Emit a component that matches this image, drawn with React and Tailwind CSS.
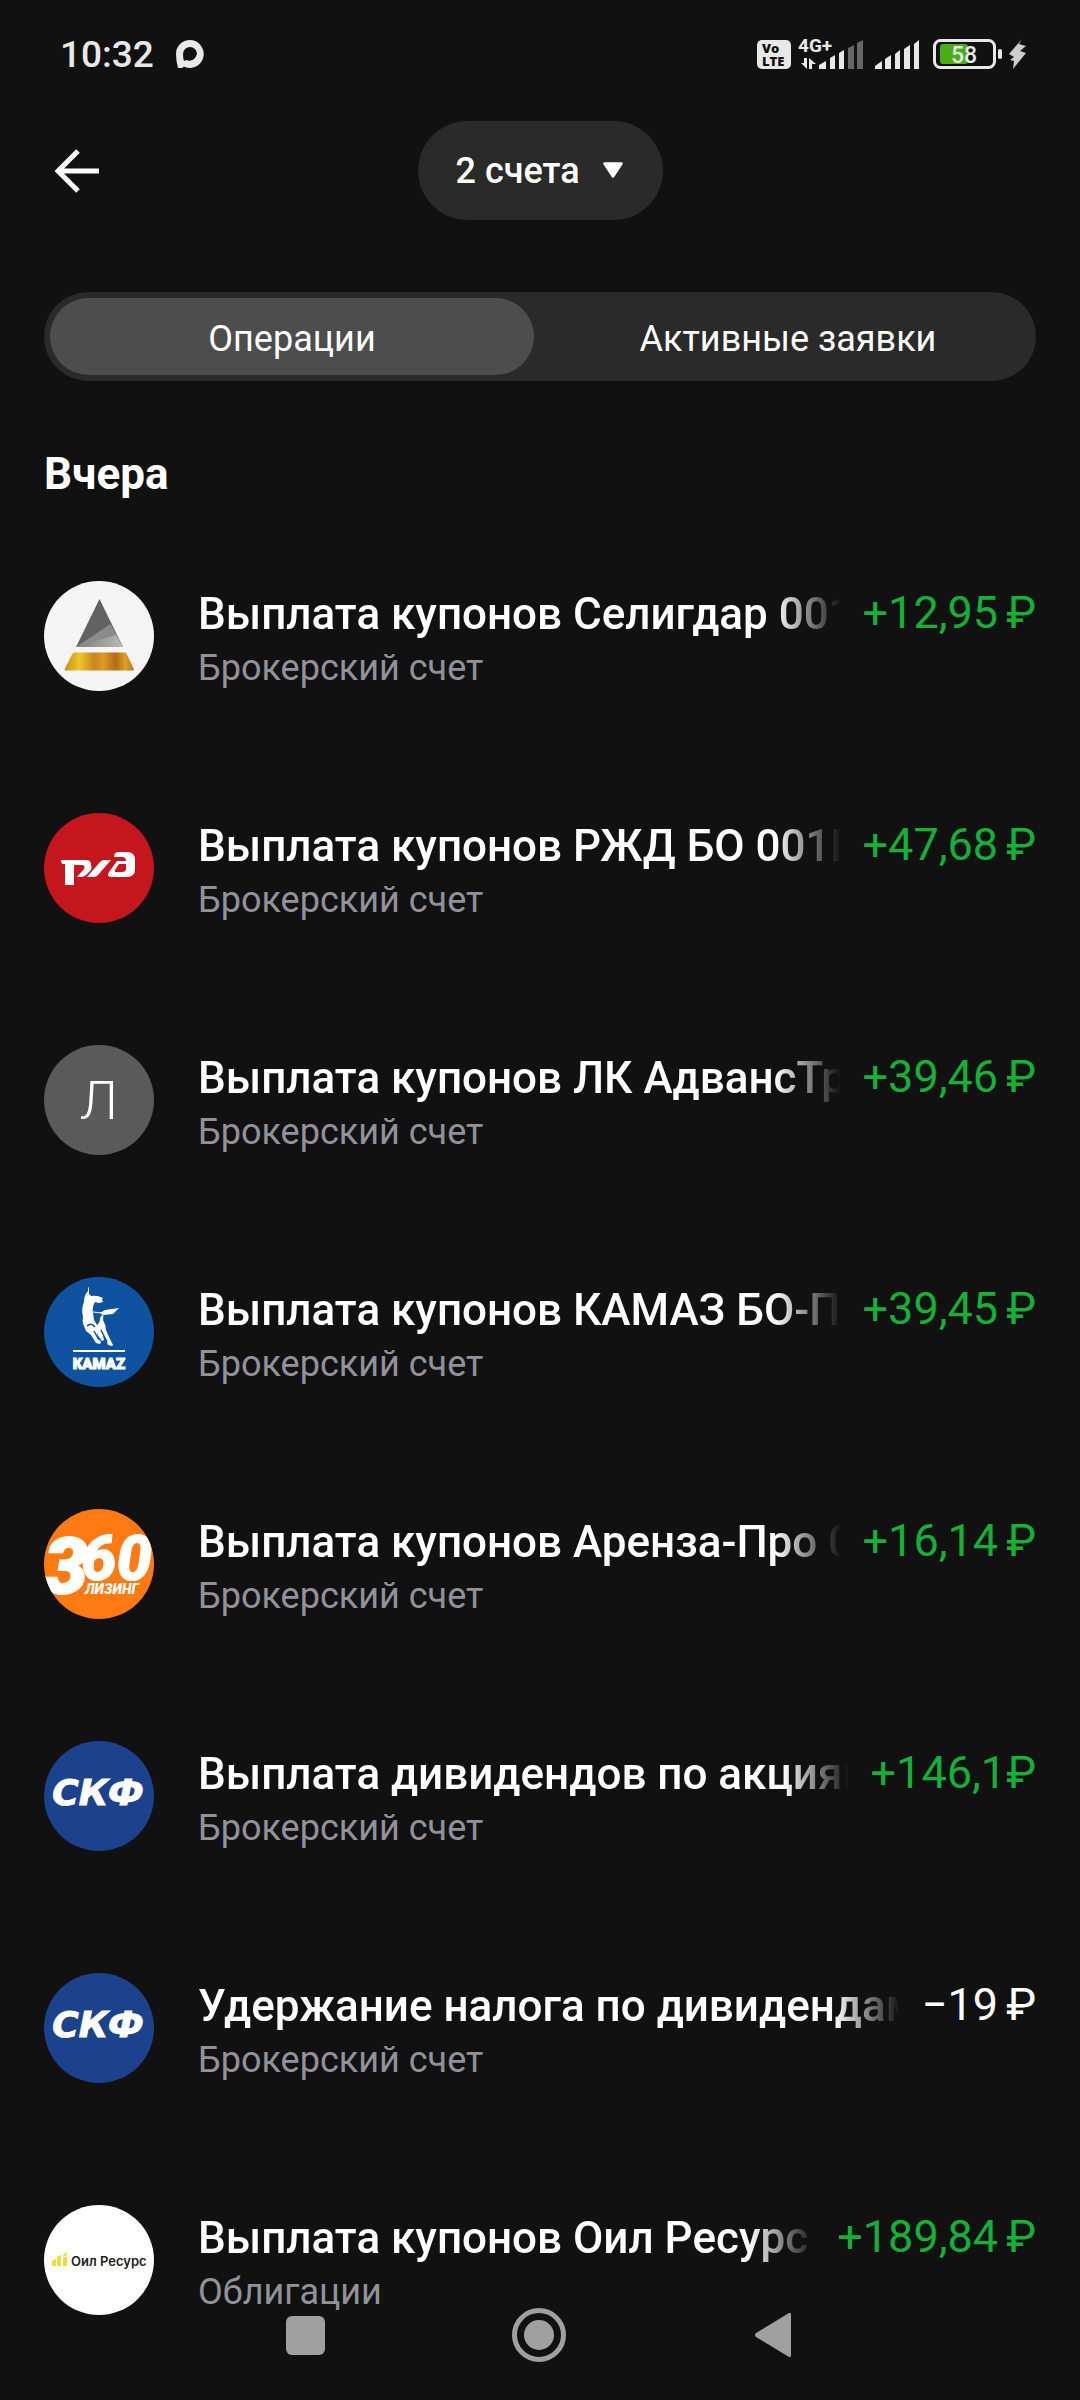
import React, { useState } from "react";

const SeligdarLogo = () => (
  <svg viewBox="0 0 110 110" className="size-full" aria-hidden="true">
    <defs>
      <linearGradient id="gold" x1="0" x2="1" y1="0" y2="0">
        <stop offset="0" stopColor="#c98a1c" />
        <stop offset="0.22" stopColor="#efc62c" />
        <stop offset="0.42" stopColor="#c9861f" />
        <stop offset="0.56" stopColor="#dc9a26" />
        <stop offset="0.74" stopColor="#b36a18" />
        <stop offset="0.88" stopColor="#dd9f28" />
        <stop offset="1" stopColor="#b9741a" />
      </linearGradient>
      <linearGradient id="steel" x1="0" x2="1" y1="0" y2="0">
        <stop offset="0" stopColor="#7c7c7c" />
        <stop offset="1" stopColor="#b9b9b9" />
      </linearGradient>
    </defs>
    <rect width="110" height="110" fill="#f5f5f5" />
    <path d="M55.500 18L79 66H32z" fill="#626262" />
    <path d="M66.500 43L32 66h47z" fill="#8b8b8b" />
    <path d="M72 54L32 66h47z" fill="url(#steel)" />
    <path d="M30 71.500h51q1 0 1.500 1l7 15q1 2-1 2H22q-2 0-1-2l7.500-15q.5-1 1.500-1z" fill="url(#gold)" />
  </svg>
);

const RzdLogo = () => (
  <svg viewBox="0 0 110 110" className="size-full" aria-hidden="true">
    <rect width="110" height="110" fill="#c5161d" />
    <g fill="#fff">
      <path d="M17 47h25q5 0 5 5 1 3 0 5l-5 5q-2 2-5 2h-4l7-8q2-4-3-4h-7v20h-9V51h-2q-2 0-2-4z" />
      <path d="M43 64l13-15q2-2 4-2h7L54 62q-2 2-4 2z" />
      <path
        d="M70 44q0-5 5-5h8q8 0 8 8v9q0 8-8 8H68q-6 0-3-5l8-11h9q0-4-4-4zm5 7l-4 6q-1 2 1 2h6q4 0 4-3v-5z"
        fillRule="evenodd"
      />
    </g>
  </svg>
);

const KamazLogo = () => (
  <svg viewBox="0 0 110 110" className="size-full" aria-hidden="true">
    <rect width="110" height="110" fill="#0f529f" />
    <path
      d="M45 17l2 2q6-1 12 2l-1 1 1 3-4 1-4-1q-3 5-2 11l1 7 3 5q3-2 3-7l2-3 1 5q3 5 3 10l3 7 4 8-1 1-4-1-2-6-3-4 1 5-2 1-3-4-2-4 1 5 3 4-1 2-4-1-5-8-5-4-2-5q-2-3-1-9-2-8 1-15 0-7 4-11 0-4 1-4z"
      fill="#fff"
    />
    <path d="M49 35l9 1M59 37l-1 13" stroke="#fff" fill="none" />
    <path d="M56 36l5-3 14-2-6 6-10 1z" fill="#fff" />
    <path d="M43 49q4-4 8 1M50 54l5 9M57 53l6 12" stroke="#0f529f" fill="none" strokeWidth="1.500" />
    <rect x="29" y="73" width="52" height="2" fill="#fff" />
    <text x="55" y="92" textAnchor="middle" fill="#fff" stroke="#fff" className="font-['Roboto'] text-[15px] font-black">
      KAMAZ
    </text>
  </svg>
);

const LeasingLogo = () => (
  <svg viewBox="0 0 110 110" className="size-full" aria-hidden="true">
    <rect width="110" height="110" fill="#ff7a12" />
    <g fill="#fff" className="font-['Roboto'] font-black italic">
      <text x="0" y="84" stroke="#fff" strokeWidth="2" className="text-[78px]">3</text>
      <text x="37" y="71" stroke="#fff" className="text-[63px]">60</text>
      <text x="41" y="85" className="text-[14px]">ЛИЗИНГ</text>
    </g>
  </svg>
);

const SkfLogo = () => (
  <svg viewBox="0 0 110 110" className="size-full" aria-hidden="true">
    <rect width="110" height="110" fill="#1d428d" />
    <text x="54" y="64" textAnchor="middle" fill="#fff" stroke="#fff" className="font-['DejaVu_Sans'] text-[36px] font-bold italic">
      СКФ
    </text>
  </svg>
);

const OilLogo = () => (
  <svg viewBox="0 0 110 110" className="size-full" aria-hidden="true">
    <rect width="110" height="110" fill="#fff" />
    <path d="M8 56l4-2v7H8zM13 52l4-2v11h-4zM19 53l4-2v10h-4zM19 50l4-3v3l-4 2z" fill="#ecdc3c" />
    <text x="27" y="61" fill="#222" className="font-['Inter'] text-[13px] font-semibold">
      Оил Ресурс
    </text>
  </svg>
);

const LetterLogo = ({ letter }) => (
  <span className="flex size-full items-center justify-center bg-[#5a5a5a] text-[54px] font-light text-white">
    {letter}
  </span>
);

const operations = [
  { id: 1, logo: <SeligdarLogo />, title: "Выплата купонов Селигдар 001", account: "Брокерский счет", amount: "+12,95 ₽" },
  { id: 2, logo: <RzdLogo />, title: "Выплата купонов РЖД БО 001P", account: "Брокерский счет", amount: "+47,68 ₽" },
  { id: 3, logo: <LetterLogo letter="Л" />, title: "Выплата купонов ЛК АдвансТр", account: "Брокерский счет", amount: "+39,46 ₽" },
  { id: 4, logo: <KamazLogo />, title: "Выплата купонов КАМАЗ БО-П", account: "Брокерский счет", amount: "+39,45 ₽" },
  { id: 5, logo: <LeasingLogo />, title: "Выплата купонов Аренза-Про 0", account: "Брокерский счет", amount: "+16,14 ₽" },
  { id: 6, logo: <SkfLogo />, title: "Выплата дивидендов по акциям", account: "Брокерский счет", amount: "+146,1₽" },
  { id: 7, logo: <SkfLogo />, title: "Удержание налога по дивидендам", account: "Брокерский счет", amount: "−19 ₽" },
  { id: 8, logo: <OilLogo />, title: "Выплата купонов Оил Ресурс", account: "Облигации", amount: "+189,84 ₽" },
];

const StatusBar = () => (
  <div className="flex h-[108px] items-center justify-between pr-[53px] pl-[60px] text-[#e8e8e8]">
    <div className="flex items-center gap-[22px]">
      <span className="pt-[2px] text-[37px] leading-[42px] font-medium">10:32</span>
      <svg width="28" height="28" viewBox="0 0 28 28" aria-hidden="true">
        <path
          d="M14 0a14 14 0 1 1-4 27.500L8 26.500 6 28H2Q0 21 0 14A14 14 0 0 1 14 0zm0 7a7 7 0 0 0-7 7q0 4 1 7l2-1q8 3 11-6a7 7 0 0 0-7-7z"
          fill="currentColor"
          fillRule="evenodd"
        />
      </svg>
    </div>

    <svg width="270" height="32" viewBox="757 38 270 32" fill="currentColor" aria-hidden="true">
      <rect x="757" y="40" width="34" height="29" rx="5" />
      <g fill="#111" className="font-['Open_Sans'] font-extrabold">
        <text x="762" y="53" className="text-[13px]">Vo</text>
        <text x="762" y="66" className="text-[13px]">LTE</text>
      </g>
      <text x="798" y="52" className="font-['Roboto'] text-[19px] font-bold">4G+</text>
      <path d="M804 58h3v11l-6-6h3zM809 58l7 6h-4v5h-3z" />
      <path d="M819 69v-4l7-4v8zM830 69V58l5-3v14zM839 69V53l5-3v19z" />
      <path d="M848 69V48l6-3v24zM857 69V43l6-3v29z" fill="#666" />
      <path d="M875 69v-3l7-5v8zM885 69V59l6-4v14zM895 69V54l5-4v19zM904 69V49l6-4v24zM914 69V44l5-4v29z" />
      <rect x="934.500" y="40.500" width="60" height="27" rx="6" fill="none" stroke="currentColor" strokeWidth="3" />
      <rect x="940" y="44" width="28" height="20" rx="3" fill="#4bad14" />
      <rect x="998" y="49" width="4" height="10" rx="2" />
      <text x="964" y="63" textAnchor="middle" className="font-['Roboto'] text-[23px] font-medium">58</text>
      <path d="M1022 39l-13 15 5 3-4 3 4 1-1 8 13-16-6-2 6-5-7-2z" fill="#ccc" />
    </svg>
  </div>
);

const Amount = ({ value }) => {
  const [number, currency] = value.split(" ");

  return (
    <span
      className={`flex gap-2 text-[45px] leading-[50px] whitespace-nowrap ${
        value.startsWith("+") ? "text-[#14b038]" : "text-white"
      }`}
    >
      <span>{number}</span>
      {currency && <span>{currency}</span>}
    </span>
  );
};

const OperationItem = ({ logo, title, account, amount }) => (
  <li className="flex">
    <div className="size-[110px] shrink-0 overflow-hidden rounded-full">{logo}</div>
    <div className="ml-11 min-w-0 flex-1">
      <div className="flex gap-[22px] pt-[7px]">
        <h3 className="min-w-0 flex-1 overflow-hidden text-[44px] leading-[52px] font-medium whitespace-nowrap text-white [mask-image:linear-gradient(to_right,black_calc(100%-66px),transparent)]">
          {title}
        </h3>
        <Amount value={amount} />
      </div>
      <p className="mt-[5px] text-[36px] leading-[46px] text-[#91929a]">{account}</p>
    </div>
  </li>
);

const tabs = ["Операции", "Активные заявки"];

const App = () => {
  const [tab, setTab] = useState(tabs[0]);

  return (
    <div className="min-h-screen bg-[#111111] font-['Roboto',sans-serif]">
      <StatusBar />

      <header className="grid grid-cols-[1fr_auto_1fr] items-center px-11 pt-[13px]">
        <button aria-label="Назад" className="flex size-[66px] items-center justify-center justify-self-start text-white">
          <svg width="44" height="44" viewBox="0 0 44 44" fill="none" stroke="currentColor" strokeWidth="5" aria-hidden="true">
            <path d="M23 2L3 22l20 20M4 22h40" />
          </svg>
        </button>
        <label className="relative flex items-center text-white">
          <select
            aria-label="Счета"
            className="h-[99px] appearance-none rounded-full bg-[#2a2a2a] pr-[82px] pl-[38px] text-[36px] leading-[42px] font-medium"
          >
            <option>2 счета</option>
          </select>
          <svg width="20" height="17" viewBox="0 0 22 18" className="pointer-events-none absolute right-10" aria-hidden="true">
            <path d="M2 0h18q3 0 1 3L12.500 16q-1.500 2-3 0L1 3Q-1 0 2 0z" fill="currentColor" />
          </svg>
        </label>
      </header>

      <main className="px-11 pt-[72px] pb-[84px]">
        <div role="tablist" className="grid grid-cols-2 gap-3 rounded-full bg-[#2a2a2a] p-[6px]">
          {tabs.map((name) => (
            <button
              key={name}
              role="tab"
              aria-selected={tab === name}
              onClick={() => setTab(name)}
              className={`h-[77px] rounded-full pt-1 text-[36px] leading-[42px] text-white ${tab === name ? "bg-[#4d4d4d]" : ""}`}
            >
              {name}
            </button>
          ))}
        </div>

        <h2 className="mt-[67px] text-[44px] leading-[52px] font-bold text-white">Вчера</h2>
        <ul className="mt-[81px] flex flex-col gap-[122px]">
          {operations.map((item) => (
            <OperationItem key={item.id} {...item} />
          ))}
        </ul>
      </main>

      <nav className="fixed inset-x-0 bottom-0 flex h-[130px] items-center justify-center gap-[178px] pr-[2px] text-[#a0a0a0]">
        <button aria-label="Недавние" className="flex size-14 items-center justify-center">
          <span className="size-[39px] rounded-md bg-current" />
        </button>
        <button aria-label="Домой" className="flex size-14 items-center justify-center">
          <svg width="54" height="54" viewBox="0 0 54 54" aria-hidden="true">
            <circle cx="27" cy="27" r="24.500" fill="none" stroke="currentColor" strokeWidth="5" />
            <circle cx="27" cy="27" r="15" fill="currentColor" />
          </svg>
        </button>
        <button aria-label="Назад в системе" className="flex size-14 items-center justify-center">
          <svg width="38" height="46" viewBox="0 0 38 46" aria-hidden="true">
            <path d="M35 1q2-1 2 2v40q0 3-2 2L2 25q-2-2 0-4z" fill="currentColor" />
          </svg>
        </button>
      </nav>
    </div>
  );
};

export default App;
